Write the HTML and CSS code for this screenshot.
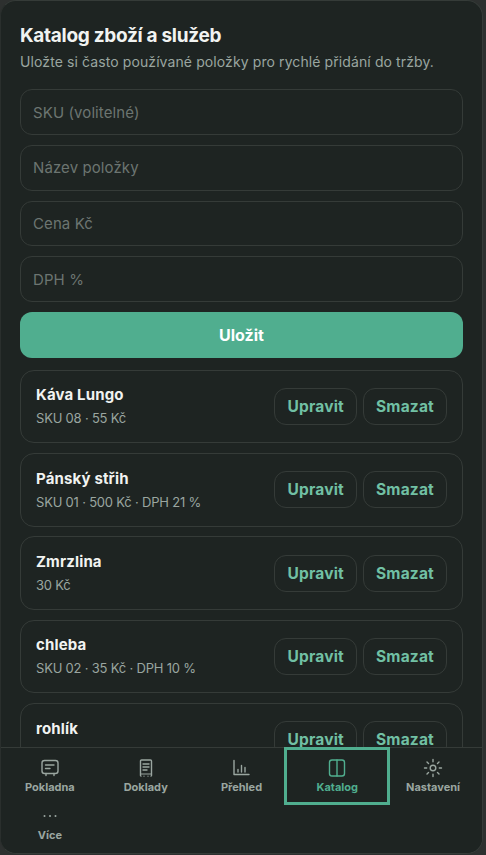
FILE: index.html
```html
<!DOCTYPE html>
<html lang="cs">
  <head>
    <meta charset="UTF-8" />
    <meta name="viewport" content="width=device-width, initial-scale=1.0" />
    <title>Katalog</title>
    <link rel="stylesheet" href="styles.css">
  </head>
  <body>
    <div class="frame">
      <main class="content">
        <h1>Katalog zboží a služeb</h1>
        <p class="lead">Uložte si často používané položky pro rychlé přidání do tržby.</p>

        <form class="form">
          <input type="text" placeholder="SKU (volitelné)" />
          <input type="text" placeholder="Název položky" />
          <input type="text" placeholder="Cena Kč" />
          <input type="text" placeholder="DPH %" />
          <button type="button" class="btn-save">Uložit</button>
        </form>

        <div class="items">
          <div class="item">
            <div class="item-info">
              <div class="item-name">Káva Lungo</div>
              <div class="item-meta">SKU 08 · 55 Kč</div>
            </div>
            <button class="btn-small">Upravit</button>
            <button class="btn-small">Smazat</button>
          </div>
          <div class="item">
            <div class="item-info">
              <div class="item-name">Pánský střih</div>
              <div class="item-meta">SKU 01 · 500 Kč · DPH 21 %</div>
            </div>
            <button class="btn-small">Upravit</button>
            <button class="btn-small">Smazat</button>
          </div>
          <div class="item">
            <div class="item-info">
              <div class="item-name">Zmrzlina</div>
              <div class="item-meta">30 Kč</div>
            </div>
            <button class="btn-small">Upravit</button>
            <button class="btn-small">Smazat</button>
          </div>
          <div class="item">
            <div class="item-info">
              <div class="item-name">chleba</div>
              <div class="item-meta">SKU 02 · 35 Kč · DPH 10 %</div>
            </div>
            <button class="btn-small">Upravit</button>
            <button class="btn-small">Smazat</button>
          </div>
          <div class="item">
            <div class="item-info">
              <div class="item-name">rohlík</div>
            </div>
            <button class="btn-small">Upravit</button>
            <button class="btn-small">Smazat</button>
          </div>
        </div>
      </main>

      <nav class="tabs">
        <a class="tab">
          <svg viewBox="0 0 20 20"><rect x="2" y="2.5" width="16" height="13" rx="2.5"/><path d="M5.5 7h8.5M5.5 10.5h4.5M6 15.5v2M14 15.5v2"/></svg>
          <span>Pokladna</span>
        </a>
        <a class="tab">
          <svg viewBox="0 0 20 20"><path d="M4.5 17.5V3A1 1 0 0 1 5.5 2h9a1 1 0 0 1 1 1v14.5"/><path d="M7 6h6M7 9h6M7 12h4"/><path class="receipt" d="M4.5 16h11M5 18.2h.01M8 18.2h.01M12 18.2h.01M15 18.2h.01"/></svg>
          <span>Doklady</span>
        </a>
        <a class="tab">
          <svg viewBox="0 0 20 20"><path d="M3 2.5V16.5h15"/><path d="M7 14v-2.5M10.5 14V7.5M14 14V9.5"/></svg>
          <span>Přehled</span>
        </a>
        <a class="tab active">
          <svg viewBox="0 0 20 20"><rect x="2.5" y="2" width="15" height="16" rx="2.5"/><path d="M10 2v16"/></svg>
          <span>Katalog</span>
        </a>
        <a class="tab">
          <svg viewBox="0 0 20 20"><circle cx="10" cy="10" r="2.8"/><path d="M10 1.5v2.2M10 16.3v2.2M1.5 10h2.2M16.3 10h2.2M4 4l1.5 1.5M14.5 14.5L16 16M4 16l1.5-1.5M14.5 5.5L16 4"/></svg>
          <span>Nastavení</span>
        </a>
        <a class="tab">
          <svg viewBox="0 0 20 20"><path class="dots" d="M4.5 10h.01M10 10h.01M15.5 10h.01"/></svg>
          <span>Více</span>
        </a>
      </nav>
    </div>
  </body>
</html>
```

FILE: styles.css
```css
:root {
  --background: #1e2422;
  --page: #2d302f;
  --border: #353b38;
  --text: #f1f3f1;
  --muted: #9aa6a0;
  --placeholder: #6c7571;
  --green: #50ae8f;
  --green-light: #71c0a4;
}

* {
  margin: 0;
  padding: 0;
  box-sizing: border-box;
  font-family: Inter, "Open Sans", sans-serif;
}

html,
body {
  height: 100%;
}

body {
  background-color: var(--page);
  color: var(--text);
  overflow: hidden;
}

.frame {
  width: 483px;
  height: 854px;
  background-color: var(--background);
  border: 1px solid var(--border);
  border-left-color: #2a2f2d;
  border-radius: 16px;
  display: flex;
  flex-direction: column;
  overflow: hidden;
}

.content {
  flex: 1;
  min-height: 0;
  overflow: hidden;
  padding: 23px 19px 0;
}

h1 {
  font-size: 19px;
  line-height: 24px;
  font-weight: 700;
  letter-spacing: -0.3px;
}

.lead {
  font-size: 14px;
  line-height: 20px;
  margin-top: 4px;
  color: var(--muted);
  letter-spacing: 0.1px;
}

.form {
  display: flex;
  flex-direction: column;
  gap: 10px;
  margin-top: 17.3px;
}

.form input {
  width: 100%;
  height: 45.67px;
  padding: 0 12px;
  background: transparent;
  border: 1px solid var(--border);
  border-radius: 12px;
  color: var(--text);
  font-size: 15px;
  letter-spacing: 0.1px;
}

.form input::placeholder {
  color: var(--placeholder);
  opacity: 1;
}

.btn-save {
  height: 46px;
  border: none;
  border-radius: 12px;
  background-color: var(--green);
  color: #fff;
  font-size: 16px;
  font-weight: 700;
}

.items {
  display: flex;
  flex-direction: column;
  gap: 9.67px;
  margin-top: 11.7px;
}

.item {
  height: 73.67px;
  flex: none;
  display: flex;
  align-items: center;
  gap: 6px;
  padding: 0 15px;
  border: 1px solid var(--border);
  border-radius: 14px;
}

.item-info {
  flex: 1;
  min-width: 0;
  min-height: 48px;
  padding-top: 3px;
}

.item-name {
  font-size: 15px;
  line-height: 20px;
  font-weight: 700;
  letter-spacing: 0.15px;
}

.item-meta {
  font-size: 13px;
  line-height: 18px;
  margin-top: 4px;
  color: var(--muted);
  letter-spacing: -0.2px;
}

.btn-small {
  height: 37px;
  padding: 0 12px;
  background: transparent;
  border: 1px solid var(--border);
  border-radius: 12px;
  color: var(--green-light);
  font-size: 15.5px;
  font-weight: 700;
  letter-spacing: 0.2px;
}

.tabs {
  flex: none;
  display: grid;
  grid-template-columns: repeat(5, 1fr);
  grid-auto-rows: 48px;
  height: 106px;
  padding: 4px 1px 0;
  background-color: var(--background);
  border-top: 1px solid var(--border);
}

.tab {
  display: flex;
  flex-direction: column;
  align-items: center;
  justify-content: center;
  gap: 2px;
  color: var(--muted);
  font-size: 11px;
  font-weight: 700;
}

.tab svg {
  width: 20px;
  height: 20px;
  fill: none;
  stroke: currentColor;
  stroke-width: 1.4;
  stroke-linecap: round;
  stroke-linejoin: round;
}

.tab .dots {
  stroke-width: 2;
}

.tab .receipt {
  stroke-width: 1.2;
}

.tab.active {
  color: var(--green);
  outline: 3px solid var(--green);
  outline-offset: 2px;
}
```
